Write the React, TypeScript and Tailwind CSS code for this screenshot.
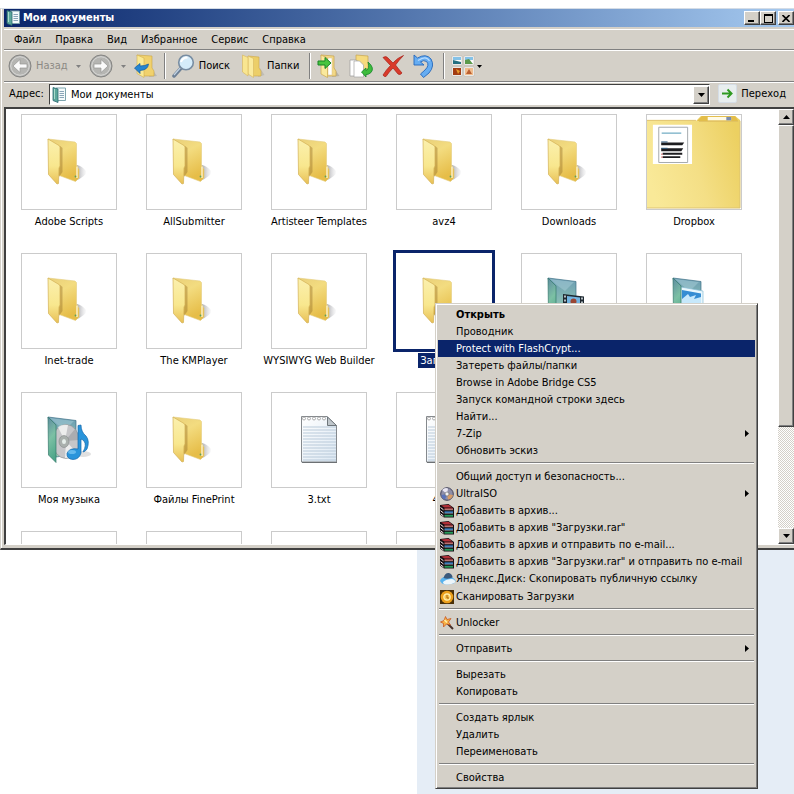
import React from 'react';

type IconProps = { className?: string };

const FolderIcon: React.FC<IconProps> = ({ className = 'h-12 w-12' }) => (
  <svg viewBox="0 0 48 48" className={className} aria-hidden="true">
    <defs>
      <linearGradient id="folderFront" x1="0" y1="0" x2="0" y2="1">
        <stop offset="0" stopColor="#fbf0ae" />
        <stop offset="0.6" stopColor="#f8e78e" />
        <stop offset="1" stopColor="#e8bf55" />
      </linearGradient>
      <linearGradient id="folderBack" x1="0" y1="0" x2="0.4" y2="1">
        <stop offset="0" stopColor="#e9cf78" />
        <stop offset="0.4" stopColor="#f3dc80" />
        <stop offset="1" stopColor="#e6bd48" />
      </linearGradient>
      <linearGradient id="folderShade" x1="0" y1="0" x2="1" y2="0">
        <stop offset="0" stopColor="#77777d" stopOpacity="0.8" />
        <stop offset="1" stopColor="#c4c4c8" stopOpacity="0.1" />
      </linearGradient>
    </defs>
    <path d="M30 43 L32 27 Q37 28 41 33 Q42 38 30 43Z" fill="url(#folderShade)" />
    <path d="M3 1 L30 4 L31.500 5.500 V27 L34 31.500 V40 L30.500 43.500 L13 37Z" fill="url(#folderBack)" stroke="#e4cd80" strokeWidth="0.6" />
    <path d="M14.500 7.500 L17.500 10 V34 L14 39Z" fill="#9c762c" opacity="0.45" />
    <path d="M3 1 L14 7.500 L15 9 V28 L14 30 L13.500 45.500 L12 46 L3.500 36.500Z" fill="url(#folderFront)" stroke="#d3b054" strokeWidth="0.7" />
    <path d="M32 28.500 V40" stroke="#fff8da" strokeWidth="1.300" />
    <circle cx="30.500" cy="38.500" r="0.9" fill="#5aa05a" />
  </svg>
);

const GlassFolder = () => (
  <>
    <defs>
      <linearGradient id="glassFront" x1="0" y1="0" x2="0.2" y2="1">
        <stop offset="0" stopColor="#5e8ba0" />
        <stop offset="0.5" stopColor="#7cc0a4" />
        <stop offset="1" stopColor="#4fa78a" />
      </linearGradient>
      <linearGradient id="glassBack" x1="0" y1="0" x2="0" y2="1">
        <stop offset="0" stopColor="#6b9cb2" />
        <stop offset="1" stopColor="#9bd3b6" />
      </linearGradient>
    </defs>
    <path d="M3 1 L31 4.500 V38 L11 41Z" fill="url(#glassBack)" stroke="#3f7186" strokeWidth="0.7" />
    <path d="M5 2 L29 5 L20 14 L13 9Z" fill="#a8cdd8" opacity="0.5" />
  </>
);

const GlassFront = () => (
  <path d="M3 1 L11 9 V46.500 L3.500 39Z" fill="url(#glassFront)" stroke="#35786c" strokeWidth="0.7" />
);

const MusicFolderIcon = () => (
  <svg viewBox="0 0 48 48" className="h-12 w-12" aria-hidden="true">
    <GlassFolder />
    <ellipse cx="38" cy="38" rx="8" ry="3" fill="#ccc" opacity="0.6" />
    <ellipse cx="21" cy="25.500" rx="13.500" ry="17" fill="#c6c6c9" stroke="#88898c" strokeWidth="0.6" />
    <path d="M20 25 L13 11 Q17 8 23 9Z M21 25 L31 36 Q27 42 20 42Z" fill="#f6f6f6" opacity="0.8" />
    <path d="M20 25 L30 13 Q34 18 34 24Z" fill="#9a9ba0" opacity="0.6" />
    <ellipse cx="19" cy="25.500" rx="5" ry="6" fill="#aab0ad" stroke="#858a8a" strokeWidth="0.6" />
    <ellipse cx="19" cy="25.500" rx="2" ry="2.500" fill="#e6eeea" />
    <GlassFront />
    <path d="M33 9.500 L36 9 Q36 16 41 20 Q45 25 42 33 Q40 36 38 36 Q42 29 39 25 Q37.500 23.500 36 23 L36 37 Q34 43.500 28 43.500 Q21.500 43 22 37.500 Q24 31.500 33 33Z" fill="#2994db" stroke="#1467ab" strokeWidth="0.7" />
    <ellipse cx="27" cy="36" rx="4" ry="2" fill="#7dc9f5" opacity="0.7" />
  </svg>
);

const VideoFolderIcon = () => (
  <svg viewBox="0 0 48 48" className="h-12 w-12" aria-hidden="true">
    <GlassFolder />
    <path d="M18 17 L39 19.500 V44 L18 40Z" fill="#1e2830" />
    <path d="M22 19 L35 20.500 V28 L22 27Z" fill="#72b4e2" />
    <circle cx="28.500" cy="24.500" r="3" fill="#9a4634" />
    <path d="M20 18.500 V40 M37 20.500 V43" stroke="#e8f0f4" strokeWidth="1.500" strokeDasharray="2 2" />
    <GlassFront />
  </svg>
);

const PictureFolderIcon = () => (
  <svg viewBox="0 0 48 48" className="h-12 w-12" aria-hidden="true">
    <GlassFolder />
    <path d="M11 10 L33 14 V42 L11 42Z" fill="#e9f7fd" stroke="#86bbd4" strokeWidth="0.7" />
    <path d="M12 13 L31 16.500 V40 H12Z" fill="#368dd3" />
    <path d="M12 22 L18 17 L20 20 L26 18 L24 22 L31 20 V27 H12Z" fill="#c6e8fb" />
    <path d="M12 26 H31 V40 H12Z" fill="#3f9457" />
    <GlassFront />
  </svg>
);

const TextFileIcon = () => (
  <svg viewBox="0 0 48 48" className="h-12 w-12" aria-hidden="true">
    <defs>
      <linearGradient id="paper" x1="0" y1="0" x2="1" y2="1">
        <stop offset="0" stopColor="#ffffff" />
        <stop offset="1" stopColor="#dce8f3" />
      </linearGradient>
    </defs>
    <path d="M6.500 0.500 H32 L41.500 9.500 V46 H6.500Z" fill="url(#paper)" stroke="#85898d" />
    {[11, 14, 17, 20, 23, 26, 29, 32, 35, 38, 41, 44].map((y) => (
      <path key={y} d={`M8 ${y} H41`} stroke="#b3c5d6" strokeWidth="0.9" />
    ))}
    {[9, 14, 19, 24, 29].map((x) => (
      <circle key={x} cx={x} cy="2.500" r="1.500" fill="#fff" stroke="#999" strokeWidth="0.8" />
    ))}
    <path d="M32.500 1 V9.500 H41.500Z" fill="#bfc6cb" stroke="#6f767b" />
    <path d="M7 46.500 H42" stroke="#6c7073" strokeWidth="1.200" />
  </svg>
);

const DocumentsIcon = () => (
  <svg viewBox="0 0 16 16" className="h-4 w-4 shrink-0" aria-hidden="true">
    <path d="M4 1 H13.500 V13.500 H4Z" fill="#f4fafb" stroke="#7da4ad" />
    <path d="M7.500 4.500 H12 M7.500 6.500 H12 M7.500 8.500 H12 M7.500 10.500 H12" stroke="#8aa5b8" />
    <path d="M1 0.500 L6 2 V15.500 L1 13.500Z" fill="#5ba79b" stroke="#2c6770" strokeWidth="0.8" />
    <path d="M2.500 2 V12" stroke="#a9dacb" />
  </svg>
);

const BackIcon: React.FC<{ forward?: boolean }> = ({ forward }) => (
  <svg viewBox="0 0 24 24" className={forward ? 'h-6 w-6 rotate-180' : 'h-6 w-6'} aria-hidden="true">
    <circle cx="12" cy="12" r="11" fill="#a8a8a6" stroke="#858583" />
    <circle cx="12" cy="12" r="9.300" fill="#b5b5b2" stroke="#dcdcda" />
    <path d="M12 5.500 L5 12 L12 18.500 V14 H19 V10 H12Z" fill="#fafafa" stroke="#959593" strokeWidth="0.7" />
  </svg>
);

const UpIcon = () => (
  <svg viewBox="0 0 24 24" className="h-6 w-6" aria-hidden="true">
    <path d="M18 15 L23 22 L15 23Z" fill="#bab8b2" />
    <path d="M3 1 L18 2 V14 L20 17 V22 L10 22Z" fill="#f0d16d" stroke="#cba644" strokeWidth="0.6" />
    <path d="M3 1 L10 4 V23.500 L3 19.500Z" fill="#fae994" stroke="#d0ae51" strokeWidth="0.6" />
    <path d="M0.500 14 L6 9.500 V12 Q11 12 14.500 10 Q14 16 6 16.500 V19.500Z" fill="#2585d1" stroke="#125a9d" strokeWidth="0.7" />
  </svg>
);

const SearchIcon = () => (
  <svg viewBox="0 0 24 24" className="h-6 w-6" aria-hidden="true">
    <path d="M2 22 L10 13" stroke="#6c7f95" strokeWidth="3.500" strokeLinecap="round" />
    <path d="M2 21 L9 13" stroke="#c4d4e4" strokeWidth="1.200" />
    <circle cx="14" cy="8.500" r="7.300" fill="#d5ecfa" stroke="#788da2" strokeWidth="1.600" />
    <path d="M9 8 Q10.500 3.500 15.500 3.500" fill="none" stroke="#fff" strokeWidth="2" />
  </svg>
);

const FoldersIcon = () => (
  <svg viewBox="0 0 24 24" className="h-6 w-6" aria-hidden="true">
    <path d="M18 14 L22.500 21 L16 23Z" fill="#bfbcb4" />
    <path d="M6 2 L17 3 V14 L19 17 V22 L10 22Z" fill="#ecce68" stroke="#cfaa49" strokeWidth="0.6" />
    <path d="M6 2 L11.500 4.500 V23.500 L6 20Z" fill="#faea9d" stroke="#d6b65a" strokeWidth="0.6" />
    <path d="M0.500 1 L6 3.500 V22 L0.500 18Z" fill="#f9e690" stroke="#d6b65a" strokeWidth="0.6" />
  </svg>
);

const MoveToIcon = () => (
  <svg viewBox="0 0 24 24" className="h-6 w-6" aria-hidden="true">
    <path d="M17 14 L22.500 22 L15 23Z" fill="#b7b3a7" />
    <path d="M4 1 L17 2 V14 L19 17 V22 H8Z" fill="#f2d887" stroke="#c8a54d" strokeWidth="0.7" />
    <path d="M11 4 H15 V21 H11Z" fill="#fff" stroke="#d4c28c" strokeWidth="0.5" />
    <path d="M4 1 L10.500 4 V23.500 L4 20Z" fill="#fae99d" stroke="#caa850" strokeWidth="0.7" />
    <path d="M1 7 H8 V3.500 L14 9 L8 14.500 V11 H1Z" fill="#48c43e" stroke="#168325" />
  </svg>
);

const CopyToIcon = () => (
  <svg viewBox="0 0 24 24" className="h-6 w-6" aria-hidden="true">
    <path d="M7 1 L19 2 V16 H7Z" fill="#f5da7e" stroke="#c7a54d" strokeWidth="0.7" />
    <path d="M1 6 H7 L11 9 V22 H1Z" fill="#fff" stroke="#9b9b9b" strokeWidth="0.7" />
    <path d="M5 7 H10.500 L14.500 11 V23 H5Z" fill="#fff" stroke="#a3a3a3" strokeWidth="0.7" />
    <path d="M19 8 Q26 14 22 18.500 Q19 21 17 20.500 V23 L12.500 18 L17 14 V16.500 Q21 15 19 8Z" fill="#3dbc3c" stroke="#15852a" strokeWidth="0.8" />
  </svg>
);

const DeleteIcon = () => (
  <svg viewBox="0 0 24 24" className="h-6 w-6" aria-hidden="true">
    <path d="M2 3.500 Q5 1.500 7 4 L12 9 Q16 4 22.500 1.500 Q18 6 14.500 11 Q17.500 15 21 19 Q19 21.500 17 20 L12 14 Q8 18 5 22.500 Q3 23 2 21 Q5 16 9.500 11.500Z" fill="#d93b2b" stroke="#a62119" strokeWidth="0.7" />
  </svg>
);

const UndoIcon = () => (
  <svg viewBox="0 0 24 24" className="h-6 w-6" aria-hidden="true">
    <path d="M1 1 L4.500 4 Q13 -1 18 5 Q22 12 16 19 L10.500 23.500 L7.500 20 L12 16 Q17 11 13.500 7.500 Q10.500 5.500 7.500 8 L11 11 H1Z" fill="#66adf2" stroke="#2466bb" strokeWidth="0.9" />
    <path d="M5 6.500 Q13 1 16.500 7" fill="none" stroke="#b9dcff" strokeWidth="1.200" />
  </svg>
);

const ViewsIcon = () => (
  <svg viewBox="0 0 24 22" className="h-[22px] w-6" aria-hidden="true">
    <path d="M1 1 H11 V10 H1Z M13 1 H23 V10 H13Z M1 12 H11 V21 H1Z M13 12 H23 V21 H13Z" fill="#fff" stroke="#b9b7b0" strokeWidth="0.6" />
    <path d="M2 2 H10 V5 H2Z M14 2 H22 V5 H14Z" fill="#85c2e7" />
    <path d="M2 5 L10 7 V9 H2Z" fill="#236e7f" />
    <path d="M14 5 L18 4 L22 9 H14Z" fill="#5c9a4c" />
    <path d="M2 13 H10 V20 H2Z" fill="#a23c12" />
    <path d="M5 14 L9 16 L7 19Z" fill="#e99b2c" />
    <path d="M14 13 H22 V20 H14Z" fill="#f0bd8e" />
    <path d="M15 19 L18 14 L21 19Z" fill="#bb5f31" />
  </svg>
);

const GoIcon = () => (
  <svg viewBox="0 0 20 20" className="h-5 w-5" aria-hidden="true">
    <rect x="0.500" y="0.500" width="18" height="18" rx="1.500" fill="#e8eeef" stroke="#d5dde6" />
    <path d="M4 9.500 H13 M9.500 5.500 L13.500 9.500 L9.500 13.500" fill="none" stroke="#2f9a22" strokeWidth="2" />
  </svg>
);

const Caret: React.FC<IconProps> = ({ className = 'h-1 w-[7px] text-black' }) => (
  <svg viewBox="0 0 7 4" className={`shrink-0 ${className}`} aria-hidden="true">
    <path d="M0 0 H7 L3.500 4Z" fill="currentColor" />
  </svg>
);

const DiscIcon = () => (
  <svg viewBox="0 0 14 14" className="h-[14px] w-[14px]" aria-hidden="true">
    <circle cx="7" cy="7" r="6.300" fill="#8d8ea8" stroke="#45455c" />
    <path d="M7 7 L2 3 Q5 0 8 1.500Z" fill="#e9e6f3" />
    <path d="M7 7 L13 8 Q12 12 8 12.500Z" fill="#d79c67" />
    <path d="M7 7 L1.500 8 Q2 12 5 12.500Z" fill="#5a73bb" />
    <circle cx="7" cy="7" r="2" fill="#f3f3f3" stroke="#666" strokeWidth="0.6" />
  </svg>
);

const RarIcon = () => (
  <svg viewBox="0 0 14 14" className="h-[14px] w-[14px]" aria-hidden="true">
    <path d="M0 1 L8.500 0 L14 4 V13.500 H4 L0 10.500Z" fill="#150d12" />
    <path d="M1 1.500 L8.500 0.800 L12.500 3.500 H4.500Z" fill="#b22f38" />
    <path d="M4.500 4.300 H13 V5.800 H4.500Z" fill="#c94f50" />
    <path d="M4.500 7.300 H13 V9.200 H4.500Z" fill="#2c72b8" />
    <path d="M4.500 10.800 H13 V12.700 H4.500Z" fill="#259a58" />
    <path d="M0.500 3.500 L3.500 5.800 M0.500 6.700 L3.500 9 M0.500 9.700 L3.500 12" stroke="#f5e9ea" strokeWidth="1" />
    <path d="M4.500 5.800 H13 M4.500 9.200 H13" stroke="#d9d4cc" strokeWidth="0.5" />
  </svg>
);

const DiskCloudIcon = () => (
  <svg viewBox="0 0 16 14" className="h-[14px] w-4" aria-hidden="true">
    <path d="M0 9 Q1 5 6 4.500 Q13 4 15.500 8.500 Q16 11 11 12 Q6 13 2 11.500Z" fill="#58b3ef" />
    <path d="M3 10 Q6 7 12 7 Q16 8 15 10.500 Q11 13 6 12.500 Q3 12 3 10Z" fill="#edf5fa" />
    <path d="M3.500 6 Q5 0.500 9 1 Q12.500 2 12.500 5.500 Q8 7.500 3.500 6Z" fill="#3b5a7c" />
  </svg>
);

const ScanIcon = () => (
  <svg viewBox="0 0 14 14" className="h-[14px] w-[14px]" aria-hidden="true">
    <path d="M0 0 H14 V14 H0Z" fill="#4a3008" />
    <circle cx="7" cy="7" r="6.300" fill="#eda01c" />
    <circle cx="7" cy="7" r="3.200" fill="#f6c453" stroke="#fff0b0" strokeWidth="1.200" />
    <path d="M7 5 V8 H9" fill="none" stroke="#a86508" strokeWidth="1" />
  </svg>
);

const WandIcon = () => (
  <svg viewBox="0 0 14 14" className="h-[14px] w-[14px]" aria-hidden="true">
    <path d="M6 6 L13 13" stroke="#45302a" strokeWidth="2" />
    <path d="M5.500 0.500 L7 3.500 L11 2.500 L8.500 6 L10.500 9 L6.500 8 L3.500 11 L3.500 7.500 L0.500 6 L4 4.500Z" fill="#f7b045" stroke="#c64e18" strokeWidth="0.7" />
    <path d="M4.500 4 L7 6.500" stroke="#fff2a8" strokeWidth="1.500" />
  </svg>
);

interface FileItem {
  name: string;
  icon?: React.ElementType;
  dropbox?: boolean;
  selected?: boolean;
}

const files: FileItem[] = [
  { name: 'Adobe Scripts', icon: FolderIcon },
  { name: 'AllSubmitter', icon: FolderIcon },
  { name: 'Artisteer Templates', icon: FolderIcon },
  { name: 'avz4', icon: FolderIcon },
  { name: 'Downloads', icon: FolderIcon },
  { name: 'Dropbox', dropbox: true },
  { name: 'Inet-trade', icon: FolderIcon },
  { name: 'The KMPlayer', icon: FolderIcon },
  { name: 'WYSIWYG Web Builder', icon: FolderIcon },
  { name: 'Загрузки', icon: FolderIcon, selected: true },
  { name: '', icon: VideoFolderIcon },
  { name: '', icon: PictureFolderIcon },
  { name: 'Моя музыка', icon: MusicFolderIcon },
  { name: 'Файлы FinePrint', icon: FolderIcon },
  { name: '3.txt', icon: TextFileIcon },
  { name: '4.txt', icon: TextFileIcon },
  { name: '' },
  { name: '' },
  { name: '' },
  { name: '' },
  { name: '' },
  { name: '' },
];

interface MenuEntry {
  label: string;
  icon?: React.ElementType;
  bold?: boolean;
  active?: boolean;
  submenu?: boolean;
  tall?: boolean;
}

const menuGroups: MenuEntry[][] = [
  [
    { label: 'Открыть', bold: true },
    { label: 'Проводник' },
    { label: 'Protect with FlashCrypt...', active: true },
    { label: 'Затереть файлы/папки' },
    { label: 'Browse in Adobe Bridge CS5' },
    { label: 'Запуск командной строки здесь' },
    { label: 'Найти...' },
    { label: '7-Zip', submenu: true },
    { label: 'Обновить эскиз' },
  ],
  [
    { label: 'Общий доступ и безопасность...' },
    { label: 'UltraISO', icon: DiscIcon, submenu: true },
    { label: 'Добавить в архив...', icon: RarIcon },
    { label: 'Добавить в архив "Загрузки.rar"', icon: RarIcon },
    { label: 'Добавить в архив и отправить по e-mail...', icon: RarIcon },
    { label: 'Добавить в архив "Загрузки.rar" и отправить по e-mail', icon: RarIcon },
    { label: 'Яндекс.Диск: Скопировать публичную ссылку', icon: DiskCloudIcon, tall: true },
    { label: 'Сканировать Загрузки', icon: ScanIcon },
  ],
  [{ label: 'Unlocker', icon: WandIcon }],
  [{ label: 'Отправить', submenu: true }],
  [{ label: 'Вырезать' }, { label: 'Копировать' }],
  [{ label: 'Создать ярлык' }, { label: 'Удалить' }, { label: 'Переименовать' }],
  [{ label: 'Свойства' }],
];

const raised = 'border border-t-white border-l-white border-r-[#404040] border-b-[#404040] bg-[#d4d0c8] shadow-[inset_-1px_-1px_0_#808080]';

const DropboxPreview = () => (
  <svg viewBox="0 0 96 96" className="h-full w-full" aria-hidden="true">
    <defs>
      <linearGradient id="dropboxFolder" x1="0" y1="0.6" x2="1" y2="0.3">
        <stop offset="0" stopColor="#f9e998" />
        <stop offset="0.5" stopColor="#f4df86" />
        <stop offset="1" stopColor="#ecd061" />
      </linearGradient>
    </defs>
    <path d="M0 6 H50 L55 1 H90 L95 5 V95 H0Z" fill="url(#dropboxFolder)" />
    <path d="M51 6 L56 1 H90 L93 6Z" fill="#e3bd49" />
    <path d="M62 2 H86 V5.500 H62Z" fill="#fffbe8" />
    <path d="M81 2 H86 V5.500 H81Z" fill="#7b8cae" />
    <path d="M0 5.500 H50 M53 6.500 H93" stroke="#dfc060" />
    <path d="M6 10 H46 V50 H6Z" fill="#fff" />
    <path d="M12 12.500 H41.500 V48.500 H12Z" fill="#fff" stroke="#a4a9ad" />
    <path d="M15 18.500 H35" stroke="#4c96b3" />
    <path d="M14.500 28 H38 L36 31 H14.500Z M14.500 34 H37 L35 37 H14.500Z M16 38.500 H36 V40.500 H16Z M16 42 H34 V44 H16Z" fill="#1d1d20" />
    <path d="M14.500 27.500 H21 M14.500 34 H21" stroke="#2b587e" />
    <path d="M14.500 40 H16 M14.500 43 H16" stroke="#d04545" />
    <path d="M0 95 H95 V6" fill="none" stroke="#dbc272" />
  </svg>
);

const FileTile: React.FC<{ item: FileItem }> = ({ item }) => {
  const Icon = item.icon;
  return (
    <li className="flex flex-col items-center">
      <div
        className={`flex h-24 w-24 shrink-0 items-center justify-center bg-white ${
          item.selected ? 'ring-3 ring-[#0a246a]' : 'border border-[#cbcbcb]'
        }`}
      >
        {Icon && <Icon />}
        {item.dropbox && <DropboxPreview />}
      </div>
      <span
        className={`mt-1 px-0.5 leading-[15px] whitespace-nowrap ${item.selected ? 'bg-[#0a246a] text-white' : ''}`}
      >
        {item.name}
      </span>
    </li>
  );
};

const ContextMenu = () => (
  <div
    role="menu"
    className="absolute top-[303px] left-[435px] z-10 w-[323px] border border-t-[#d4d0c8] border-l-[#d4d0c8] border-r-[#404040] border-b-[#404040] bg-[#d4d0c8] p-0.5 shadow-[inset_1px_1px_0_#fff,inset_-1px_-1px_0_#808080]"
  >
    {menuGroups.map((group, groupIndex) => (
      <React.Fragment key={groupIndex}>
        {groupIndex > 0 && <hr className="mx-px mt-[3px] mb-1 h-0.5 border-t border-t-[#808080] border-b border-b-white" />}
        {group.map((entry) => {
          const Icon = entry.icon;
          return (
            <button
              key={entry.label}
              type="button"
              role="menuitem"
              className={`flex w-full items-center pr-1.5 pl-0.5 text-left whitespace-nowrap ${
                entry.tall ? 'h-[18px]' : 'h-[17px]'
              } ${entry.active ? 'bg-[#0a246a] text-white' : ''} ${entry.bold ? 'font-bold' : ''}`}
            >
              <span className="flex w-4 shrink-0">{Icon && <Icon />}</span>
              <span className="flex-1">{entry.label}</span>
              {entry.submenu && (
                <svg viewBox="0 0 4 7" className="h-[7px] w-1 shrink-0" aria-hidden="true">
                  <path d="M0 0 L4 3.500 L0 7Z" fill="currentColor" />
                </svg>
              )}
            </button>
          );
        })}
      </React.Fragment>
    ))}
  </div>
);

const Divider = () => <div className="mx-1.5 h-[26px] w-0.5 border-l border-r border-l-[#808080] border-r-white" />;

const App = () => {
  return (
    <div className="relative min-h-screen overflow-hidden bg-white bg-[linear-gradient(90deg,#ffffff_417px,#e5edf6_417px)] font-['DejaVu_Sans_Condensed','DejaVu_Sans',sans-serif] text-[11px] leading-4 text-black">
      <div className="h-2 bg-white" />
      <main className="border-t border-b-2 border-l border-t-[#d4dce6] border-b-[#404040] border-l-[#d4d0c8] bg-[#d4d0c8] pb-[3px] pl-[3px] shadow-[inset_1px_0_0_#fff]">
        <header className="flex h-[18px] items-center bg-linear-to-r from-[#0a246a] to-[#a6caf0] pl-0.5">
          <DocumentsIcon />
          <h1 className="flex-1 pl-px font-bold text-white">Мои документы</h1>
          <button type="button" aria-label="Свернуть" className={`flex h-[14px] w-4 items-end pb-0.5 pl-[3px] ${raised}`}>
            <span className="h-0.5 w-1.5 bg-black" />
          </button>
          <button type="button" aria-label="Развернуть" className={`flex h-[14px] w-4 items-center justify-center ${raised}`}>
            <span className="h-[9px] w-[9px] border border-t-2 border-black" />
          </button>
          <button type="button" aria-label="Закрыть" className={`ml-0.5 flex h-[14px] w-4 items-center justify-center ${raised}`}>
            <svg viewBox="0 0 8 7" className="h-[7px] w-2" aria-hidden="true">
              <path d="M0.500 0 L7.500 7 M7.500 0 L0.500 7" stroke="#000" strokeWidth="1.600" />
            </svg>
          </button>
        </header>

        <nav className="mt-0.5 flex h-[21px] items-center border-t border-b border-t-white border-b-[#808080] pl-[3px]">
          {['Файл', 'Правка', 'Вид', 'Избранное', 'Сервис', 'Справка'].map((label) => (
            <button key={label} type="button" className="px-[7px]">
              {label}
            </button>
          ))}
        </nav>

        <div className="flex h-8 items-center border-t border-b border-t-white border-b-[#808080] pl-1">
          <button type="button" disabled className="flex items-center gap-1 text-[#8c8a85]">
            <BackIcon />
            Назад
          </button>
          <button type="button" aria-label="Назад: список" disabled className="px-2">
            <Caret className="h-[3px] w-[5px] text-[#808080]" />
          </button>
          <button type="button" aria-label="Вперед" disabled>
            <BackIcon forward />
          </button>
          <button type="button" aria-label="Вперед: список" disabled className="px-2">
            <Caret className="h-[3px] w-[5px] text-[#808080]" />
          </button>
          <button type="button" aria-label="Вверх">
            <UpIcon />
          </button>
          <Divider />
          <button type="button" className="flex items-center gap-[3px]">
            <SearchIcon />
            Поиск
          </button>
          <button type="button" className="ml-3 flex items-center gap-px">
            <FoldersIcon />
            Папки
          </button>
          <div className="ml-1">
            <Divider />
          </div>
          <div className="flex gap-2">
            <button type="button" aria-label="Переместить в">
              <MoveToIcon />
            </button>
            <button type="button" aria-label="Копировать в">
              <CopyToIcon />
            </button>
            <button type="button" aria-label="Удалить">
              <DeleteIcon />
            </button>
            <button type="button" aria-label="Отменить">
              <UndoIcon />
            </button>
          </div>
          <Divider />
          <button type="button" aria-label="Вид" className="flex items-center gap-0.5">
            <ViewsIcon />
            <Caret className="h-[3px] w-[5px] text-black" />
          </button>
        </div>

        <div className="flex h-[25px] items-start border-t border-t-white pt-px pl-[5px]">
          <label htmlFor="address" className="w-10 leading-5">
            Адрес:
          </label>
          <div className="flex h-[21px] flex-1 items-center border border-t-[#404040] border-r-white border-b-white border-l-[#404040] bg-white pl-0.5">
            <DocumentsIcon />
            <input
              id="address"
              type="text"
              defaultValue="Мои документы"
              className="min-w-0 flex-1 bg-transparent pl-[3px] outline-none"
            />
            <button type="button" aria-label="Список адресов" className={`flex h-[18px] w-4 items-center justify-center ${raised}`}>
              <Caret />
            </button>
          </div>
          <button type="button" className="mr-2 ml-2 flex items-center gap-[3px]">
            <GoIcon />
            Переход
          </button>
        </div>

        <section className="flex h-[438px] overflow-hidden border-t-2 border-b border-l-2 border-t-[#404040] border-b-white border-l-[#404040] bg-white">
          <ul className="grid flex-1 auto-rows-[139px] grid-cols-[repeat(auto-fill,124px)] gap-x-px pt-[5px] pl-px">
            {files.map((item, index) => (
              <FileTile key={index} item={item} />
            ))}
          </ul>
          <div className="flex w-4 flex-col bg-[repeating-conic-gradient(#d4d0c8_0_25%,#ffffff_0_50%)] bg-size-[2px_2px]">
            <button type="button" aria-label="Прокрутить вверх" className={`flex h-4 items-center justify-center ${raised}`}>
              <Caret className="h-1 w-[7px] rotate-180" />
            </button>
            <div className={`h-[302px] ${raised}`} />
            <button type="button" aria-label="Прокрутить вниз" className={`mt-auto flex h-4 items-center justify-center ${raised}`}>
              <Caret />
            </button>
          </div>
        </section>
      </main>
      <ContextMenu />
    </div>
  );
};

export default App;
